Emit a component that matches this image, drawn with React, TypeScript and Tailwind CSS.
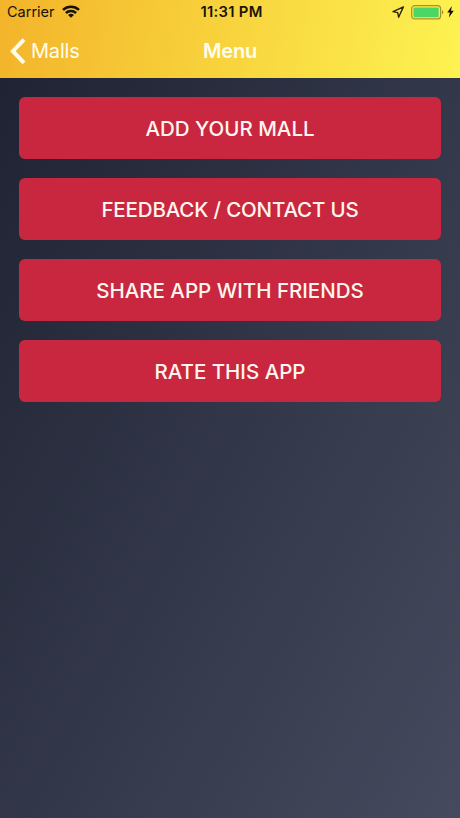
const ACTIONS = [
  { label: "ADD YOUR MALL", tracking: "tracking-normal" },
  { label: "FEEDBACK / CONTACT US", tracking: "tracking-[-0.16px]" },
  { label: "SHARE APP WITH FRIENDS", tracking: "tracking-normal" },
  { label: "RATE THIS APP", tracking: "tracking-normal" },
];

function WifiIcon() {
  return (
    <svg width="18" height="13" viewBox="0 0 18 13" fill="none" stroke="#17130a" strokeWidth="2.5">
      <path d="M1 4.9C5.5.7 12.5.7 17 4.9" />
      <path d="M3.9 8c2.9-2.7 7.3-2.7 10.2 0" />
      <path d="M9 12.7 6.1 9.9c1.6-1.5 4.2-1.5 5.8 0Z" fill="#17130a" stroke="none" />
    </svg>
  );
}

function LocationIcon() {
  return (
    <svg width="13" height="13" viewBox="0 0 13 13" fill="none" stroke="#2b250c" strokeWidth="1.4" strokeLinejoin="round">
      <path d="M11.4 .9 1 5.6l4.7 1 .9 4.6Z" />
    </svg>
  );
}

function BatteryIcon() {
  return (
    <svg width="33" height="15" viewBox="0 0 33 15">
      <rect x=".7" y=".7" width="28.9" height="13.2" rx="3" fill="none" stroke="#a8922d" strokeWidth="1.2" />
      <rect x="2.5" y="2.4" width="25.2" height="9.8" rx="1.2" fill="#4bd763" />
      <path d="M31 5.2c1.7.6 1.7 3.6 0 4.2Z" fill="#9c8b2d" />
    </svg>
  );
}

function BoltIcon() {
  return (
    <svg width="7" height="12" viewBox="0 0 7 12" fill="#17130a">
      <path d="M4.9 0 .2 6.4h2.6L1.9 11.4 6.8 4.7H4Z" />
    </svg>
  );
}

function StatusBar() {
  return (
    <div className="grid h-6 grid-cols-[1fr_auto_1fr] items-center text-[#17130a]">
      <div className="flex items-center gap-[7px] pl-[7px]">
        <span className="text-[14.5px]">Carrier</span>
        <span className="-mt-0.5">
          <WifiIcon />
        </span>
      </div>
      <span className="pl-[3px] text-[14.8px] font-semibold tracking-[0.3px]">11:31 PM</span>
      <div className="flex items-center justify-end pr-[6px]">
        <LocationIcon />
        <span className="ml-[6px]">
          <BatteryIcon />
        </span>
        <span className="ml-[3px]">
          <BoltIcon />
        </span>
      </div>
    </div>
  );
}

function NavBar() {
  return (
    <div className="grid h-[54px] grid-cols-[1fr_auto_1fr] items-center text-[#fffdf0]">
      <button className="flex items-center gap-[5px] pl-[10px] text-[20px] tracking-[-0.2px]">
        <svg width="16" height="27" viewBox="0 0 16 27" fill="none" stroke="currentColor" strokeWidth="4">
          <path d="M14 1.6 2.9 13.2 14 24.8" />
        </svg>
        Malls
      </button>
      <h1 className="text-[20px] font-semibold tracking-[-0.2px]">Menu</h1>
      <span />
    </div>
  );
}

export default function App() {
  return (
    <div className="flex h-[818px] w-[460px] flex-col overflow-hidden bg-linear-[to_bottom_right,#1d2131,#454a5e] font-['Inter','Liberation_Sans',sans-serif]">
      <header className="h-[77.5px] shrink-0 bg-linear-[100deg,#f3b42a,#fdf351]">
        <StatusBar />
        <NavBar />
      </header>
      <main className="flex flex-col gap-[19.7px] px-[19px] pt-[19.8px]">
        {ACTIONS.map((a) => (
          <button
            key={a.label}
            className={`flex h-[61.3px] items-center justify-center rounded-[6px] bg-[#c8273f] pt-[2.5px] text-[20.5px] font-medium text-[#fff5ee] ${a.tracking}`}
          >
            {a.label}
          </button>
        ))}
      </main>
    </div>
  );
}
